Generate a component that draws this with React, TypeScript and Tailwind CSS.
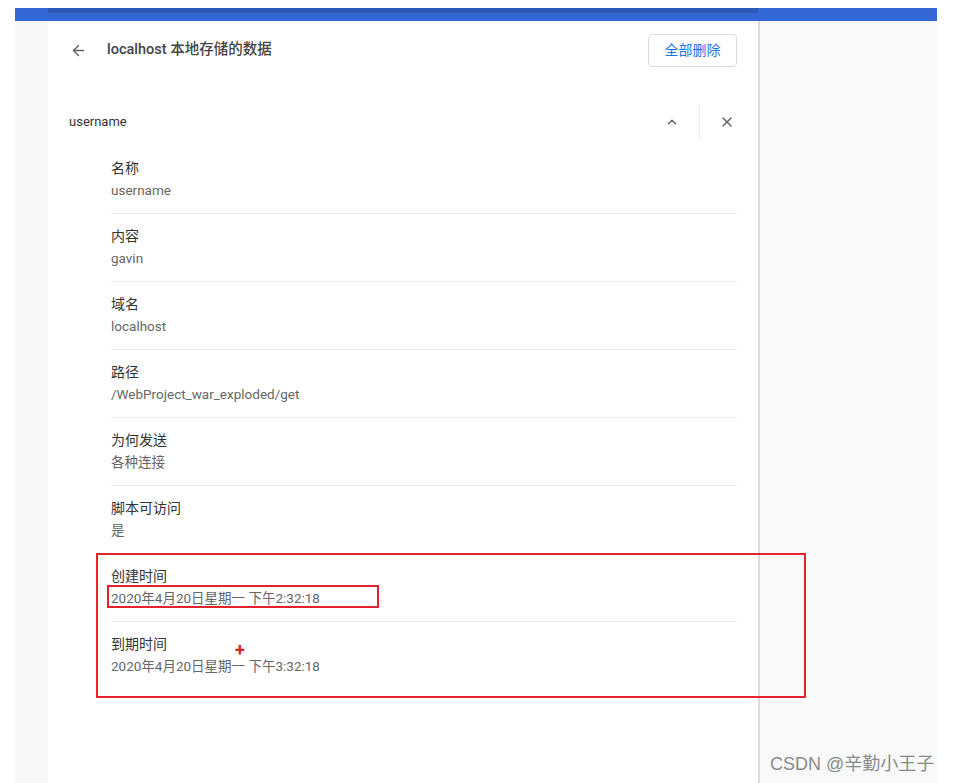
import { ArrowLeft, ChevronUp, X } from 'lucide-react'

const items = [
  { label: '名称', value: 'username' },
  { label: '内容', value: 'gavin' },
  { label: '域名', value: 'localhost' },
  { label: '路径', value: '/WebProject_war_exploded/get' },
  { label: '为何发送', value: '各种连接' },
  { label: '脚本可访问', value: '是' },
  { label: '创建时间', value: '2020年4月20日星期一 下午2:32:18' },
  { label: '到期时间', value: '2020年4月20日星期一 下午3:32:18' },
]

export default function App() {
  return (
    <div
      className="relative w-[955px] h-[783px] bg-white overflow-hidden"
      style={{ fontFamily: 'Roboto, "Noto Sans CJK SC", sans-serif' }}
    >
      <div className="ml-[15px] w-[922px] h-full pt-[8px] flex flex-col">
        {/* top bar */}
        <div className="h-[13px] bg-[#3367d6] flex">
          <div className="ml-[33px] w-[710px] h-[5px] bg-[#2c58b9]" />
        </div>

        <div className="flex flex-1 min-h-0">
          <div className="w-[33px] bg-[#f7f8f8]" />

          {/* card */}
          <div className="w-[712px] bg-white border-r-2 border-[#dcdcdc]">
            <div className="h-[58px] flex items-center pl-[22px] pr-[21px]">
              <ArrowLeft className="w-[17px] h-[17px] text-[#5f6368]" strokeWidth={2} />
              <span className="ml-[20px] text-[14.5px] font-medium text-[#444]">localhost 本地存储的数据</span>
              <button className="ml-auto w-[89px] h-[33px] border border-[#dadce0] rounded-[4px] text-[14px] text-[#1a73e8] bg-white">
                全部删除
              </button>
            </div>

            <div className="mt-[25px] h-[36px] flex items-center pl-[21px] pr-[21px]">
              <span className="text-[13px] text-[#333]">username</span>
              <div className="ml-auto flex items-center h-full">
                <ChevronUp className="w-[14px] h-[14px] text-[#5f6368]" strokeWidth={2.5} />
                <div className="ml-[20px] mr-[19px] w-px h-full bg-[#ececec]" />
                <X className="w-[16px] h-[16px] text-[#5f6368]" strokeWidth={2} />
                <div className="w-[2px]" />
              </div>
            </div>

            <div className="mt-[6px] pl-[63px] pr-[21px]">
              {items.map((it, i) => (
                <div
                  key={it.label}
                  className={`pt-[12px] pb-[13px] ${i < items.length - 1 ? 'border-b border-[#ededed]' : ''}`}
                >
                  <div className="h-[20px] leading-[20px] text-[14px] text-[#333]">{it.label}</div>
                  <div className="mt-[2px] h-[20px] leading-[20px] text-[13.5px] text-[#666]">{it.value}</div>
                </div>
              ))}
            </div>
          </div>

          <div className="flex-1 bg-[#f8f9f9]" />
        </div>
      </div>

      {/* annotations */}
      <div className="absolute left-[96px] top-[553px] w-[710px] h-[145px] border-2 border-[#e3222b]" />
      <div className="absolute left-[107px] top-[585px] w-[272px] h-[23px] border-2 border-[#e3222b]" />
      <div className="absolute left-[235px] top-[640px] text-[#d9232a] text-[18px] font-bold leading-[20px]">+</div>

      <div
        className="absolute left-[770px] top-[752px] text-[18px] text-[#8a8a8a] leading-[24px]"
        style={{ fontFamily: '"Liberation Sans", "Noto Sans CJK SC", sans-serif' }}
      >
        CSDN @辛勤小王子
      </div>
    </div>
  )
}
